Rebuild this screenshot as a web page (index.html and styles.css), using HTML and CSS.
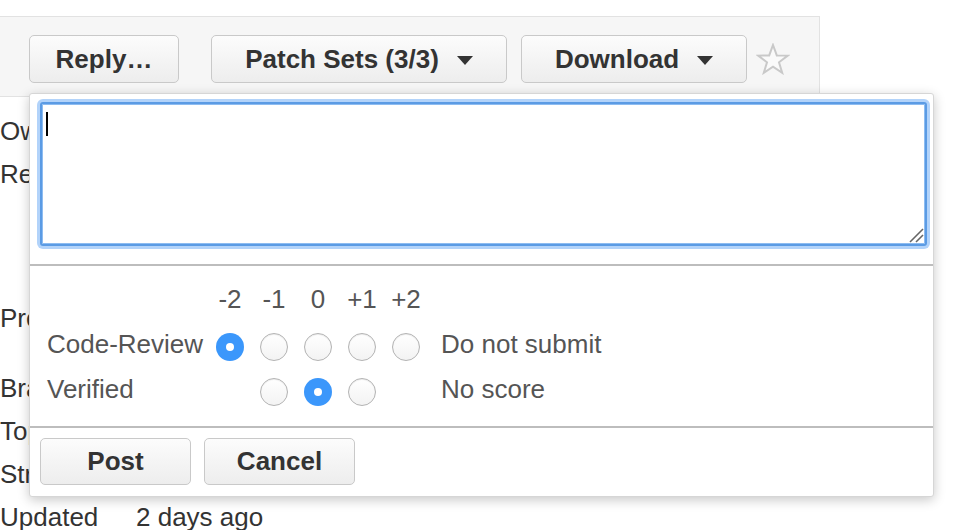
FILE: index.html
```html
<!DOCTYPE html>
<html lang="en">
<head>
<meta charset="utf-8">
<title>Change</title>
<link rel="stylesheet" href="styles.css">
</head>
<body>
<div class="page">
  <div class="header">
    <div class="actions">
      <button class="btn btn-reply">Reply…</button>
      <button class="btn btn-patch">Patch Sets (3/3)<span class="tri"></span></button>
      <button class="btn btn-download">Download<span class="tri"></span></button>
      <svg class="star" width="34" height="32" viewBox="0 0 34 32" aria-label="star">
        <polygon points="17,2 20.8,12.4 31.8,12.6 23,19.3 26.2,29.8 17,23.6 7.8,29.8 11,19.3 2.2,12.6 13.2,12.4" fill="#fafafa" stroke="#c9c9c9" stroke-width="2" stroke-linejoin="miter"/>
      </svg>
    </div>
  </div>

  <div class="info">
    <div class="row r-owner"><span class="lbl">Owner</span><span class="val">Jane Doe</span></div>
    <div class="row r-reviewers"><span class="lbl">Reviewers</span><span class="val">John Smith</span></div>
    <div class="row r-project"><span class="lbl">Project</span><span class="val">gerrit</span></div>
    <div class="row"><span class="lbl">Branch</span><span class="val">master</span></div>
    <div class="row"><span class="lbl">Topic</span><span class="val"></span></div>
    <div class="row"><span class="lbl">Strategy</span><span class="val">Merge if Necessary</span></div>
    <div class="row"><span class="lbl">Updated</span><span class="val">2 days ago</span></div>
  </div>

  <div class="popup">
    <div class="comment-area">
      <div class="textarea">
        <span class="caret"></span>
        <svg class="grip" width="16" height="16" viewBox="0 0 16 16">
          <line x1="2" y1="15" x2="15" y2="2" stroke="#666" stroke-width="1.6"/>
          <line x1="8" y1="15" x2="15" y2="8" stroke="#666" stroke-width="1.6"/>
        </svg>
      </div>
    </div>
    <div class="scores">
      <div class="score-grid">
        <span class="cell"></span>
        <span class="cell head">-2</span>
        <span class="cell head">-1</span>
        <span class="cell head">0</span>
        <span class="cell head">+1</span>
        <span class="cell head">+2</span>
        <span class="cell"></span>

        <span class="cell name r2">Code-Review</span>
        <span class="cell r2"><span class="radio on"></span></span>
        <span class="cell r2"><span class="radio"></span></span>
        <span class="cell r2"><span class="radio"></span></span>
        <span class="cell r2"><span class="radio"></span></span>
        <span class="cell r2"><span class="radio"></span></span>
        <span class="cell desc r2">Do not submit</span>

        <span class="cell name r3">Verified</span>
        <span class="cell r3"></span>
        <span class="cell r3"><span class="radio"></span></span>
        <span class="cell r3"><span class="radio on"></span></span>
        <span class="cell r3"><span class="radio"></span></span>
        <span class="cell r3"></span>
        <span class="cell desc r3">No score</span>
      </div>
    </div>
    <div class="popup-buttons">
      <button class="btn btn-small">Post</button>
      <button class="btn btn-small">Cancel</button>
    </div>
  </div>
</div>
</body>
</html>
```

FILE: styles.css
```css
* { box-sizing: border-box; }

html, body {
  margin: 0;
  padding: 0;
  background: #ffffff;
  overflow: hidden;
}

body {
  font-family: "Liberation Sans", Arial, Helvetica, sans-serif;
  color: #333333;
  width: 962px;
  height: 530px;
}

.page {
  position: relative;
  width: 962px;
  height: 530px;
  overflow: hidden;
}

.header {
  margin-top: 16px;
  width: 820px;
  height: 81px;
  background: #f6f6f6;
  border-top: 1px solid #e2e2e2;
  border-right: 1px solid #e2e2e2;
  border-bottom: 1px solid #e2e2e2;
}

.actions {
  display: flex;
  align-items: center;
  padding: 18px 0 0 29px;
}

.btn {
  height: 48px;
  border: 1px solid #c9c9c9;
  border-radius: 5px;
  background: linear-gradient(#fcfcfc, #ededed);
  font-family: "Liberation Sans", Arial, Helvetica, sans-serif;
  font-weight: bold;
  font-size: 26px;
  color: #333333;
  display: flex;
  align-items: center;
  justify-content: center;
  padding: 0;
  margin: 0;
}

.btn-reply { width: 150px; }
.btn-patch { width: 296px; margin-left: 32px; }
.btn-download { width: 226px; margin-left: 14px; }

.tri {
  display: inline-block;
  width: 0;
  height: 0;
  margin-left: 18px;
  margin-top: 2px;
  border-left: 8px solid transparent;
  border-right: 8px solid transparent;
  border-top: 9px solid #333333;
}

.star {
  margin-left: 9px;
  margin-top: -1px;
}

.info {
  padding-top: 13px;
}

.row {
  display: grid;
  grid-template-columns: 136px auto;
  height: 43px;
  line-height: 43px;
  font-size: 26px;
  color: #333333;
  white-space: nowrap;
}

.r-reviewers { height: 144px; }
.r-project { height: 70px; }

.popup {
  position: absolute;
  left: 29px;
  top: 93px;
  width: 905px;
  height: 404px;
  background: #ffffff;
  border: 1px solid #d6d6d6;
  border-radius: 3px;
  box-shadow: 0 3px 12px rgba(0, 0, 0, 0.22);
}

.comment-area {
  padding: 8px 6px 18px 10px;
  height: 172px;
  border-bottom: 2px solid #bdbdbd;
}

.textarea {
  position: relative;
  width: 887px;
  height: 144px;
  border: 2px solid #5b9be4;
  border-radius: 3px;
  background: #ffffff;
  box-shadow: 0 0 0 3px #b2d3fa, inset 0 0 0 1px #8dbcf1;
  padding: 6px 4px;
}

.caret {
  display: block;
  width: 2px;
  height: 24px;
  background: #000000;
  margin-top: 2px;
}

.grip {
  position: absolute;
  right: 1px;
  bottom: 1px;
}

.scores {
  padding: 10px 0 14px 17px;
  border-bottom: 2px solid #bdbdbd;
}

.score-grid {
  display: grid;
  grid-template-columns: 161px repeat(5, 44px) auto;
  grid-template-rows: 46px 44px 46px;
  font-size: 26px;
  color: #555555;
}

.cell {
  display: flex;
  align-items: center;
  justify-content: center;
  white-space: nowrap;
}

.cell.name { justify-content: flex-start; }
.cell.desc { justify-content: flex-start; padding-left: 13px; }

.radio {
  display: block;
  width: 28px;
  height: 28px;
  border-radius: 50%;
  border: 1px solid #b3b3b3;
  background: linear-gradient(#ffffff, #f3f3f3);
  box-shadow: inset 0 1px 1px rgba(0, 0, 0, 0.08);
  margin-top: 5px;
  position: relative;
}

.radio.on {
  border: none;
  background: #3b97fb;
  box-shadow: none;
}

.radio.on::after {
  content: "";
  position: absolute;
  left: 10px;
  top: 10px;
  width: 8px;
  height: 8px;
  border-radius: 50%;
  background: #ffffff;
}

.popup-buttons {
  display: flex;
  gap: 13px;
  padding: 10px 0 0 10px;
}

.btn-small {
  width: 151px;
  height: 47px;
}
```
